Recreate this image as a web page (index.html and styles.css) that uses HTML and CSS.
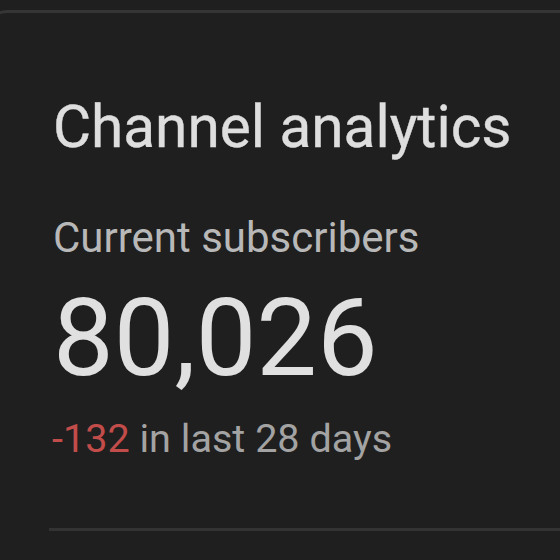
FILE: index.html
```html
<!DOCTYPE html>
<html>
<head>
<meta charset="utf-8">
<link rel="stylesheet" href="styles.css">
</head>
<body>
<div class="card">
  <h1 class="title">Channel analytics</h1>
  <div class="label">Current subscribers</div>
  <div class="count">80,026</div>
  <div class="change"><span class="neg">-132</span> in last 28 days</div>
  <div class="divider"></div>
</div>
</body>
</html>
```
FILE: styles.css
```css
html, body {
  margin: 0;
  padding: 0;
  background: #1f1f1f;
  width: 560px;
  height: 560px;
  overflow: hidden;
}
body {
  font-family: Roboto, "Noto Sans", sans-serif;
  padding-top: 10px;
  box-sizing: border-box;
}
.card {
  margin-left: -20px;
  border-top: 3px solid #353535;
  border-left: 3px solid #353535;
  border-top-left-radius: 28px;
  height: 560px;
  padding: 85px 0 0 70px;
  box-sizing: border-box;
}
.title {
  margin: 0;
  font-size: 58.5px;
  font-weight: 400;
  color: #dedede;
  line-height: 1;
  -webkit-text-stroke: 0.4px #dedede;
}
.label {
  margin-top: 60px;
  font-size: 42px;
  color: #b8b8b8;
  line-height: 1;
}
.count {
  margin-top: 25px;
  font-size: 108px;
  color: #e0e0e0;
  line-height: 1;
}
.change {
  margin-top: 27px;
  margin-left: -1px;
  font-size: 39.6px;
  color: #a3a3a3;
  line-height: 1;
}
.neg {
  color: #c24c4a;
}
.divider {
  margin-top: 70px;
  margin-left: -4px;
  height: 3px;
  background: #333333;
}
```
